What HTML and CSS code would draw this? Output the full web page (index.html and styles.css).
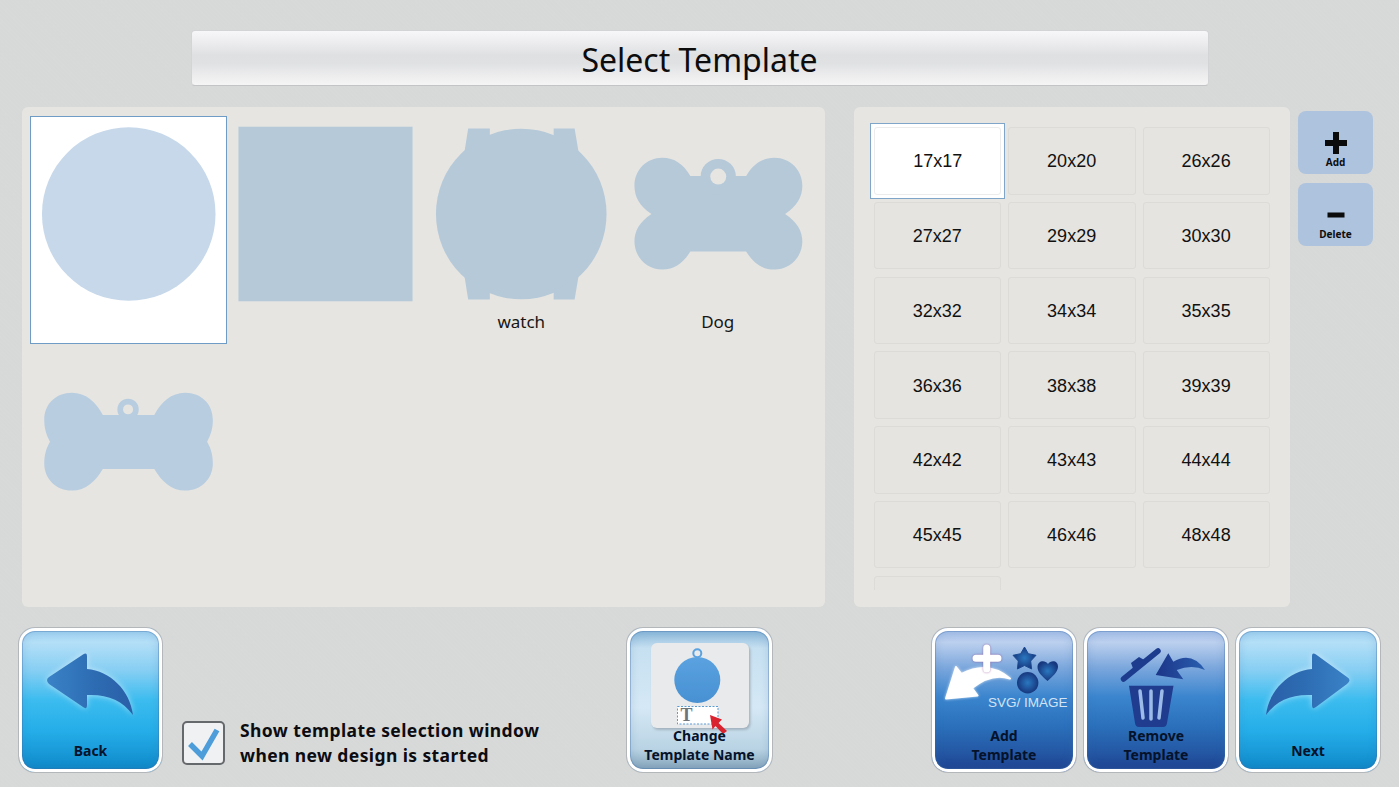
FILE: index.html
```html
<!DOCTYPE html>
<html lang="en">
<head>
<meta charset="utf-8">
<title>Select Template</title>
<link rel="stylesheet" href="styles.css">
</head>
<body>
<svg class="defs" width="0" height="0" aria-hidden="true">
  <defs>
    <linearGradient id="arrowL" x1="0" x2="1" y1="0" y2="0"><stop offset="0" stop-color="#3a82c6"/><stop offset=".55" stop-color="#2d6cb2"/><stop offset="1" stop-color="#2a5fa8"/></linearGradient>
    <linearGradient id="arrowR" x1="1" x2="0" y1="0" y2="0"><stop offset="0" stop-color="#3a82c6"/><stop offset=".55" stop-color="#2d6cb2"/><stop offset="1" stop-color="#2a5fa8"/></linearGradient>
    <radialGradient id="shape"><stop offset="0" stop-color="#2a78c0"/><stop offset="1" stop-color="#17387f"/></radialGradient>
    <linearGradient id="tagFill" x1="0" x2="0" y1="0" y2="1"><stop offset="0" stop-color="#5aa2e0"/><stop offset="1" stop-color="#4790d2"/></linearGradient>
    <linearGradient id="remArrow" x1="0" x2="1" y1="0" y2="0"><stop offset="0" stop-color="#1c3588"/><stop offset="1" stop-color="#2a5fb0"/></linearGradient>
  </defs>
</svg>

<header class="title-wrap"><h1 class="title">Select Template</h1></header>

<main class="main">
  <section class="templates">
    <div class="tpl tpl-selected">
      <svg class="tpl-art" viewBox="30 116 197 192"><circle class="lite" cx="129" cy="214" r="87"/></svg>
    </div>
    <div class="tpl">
      <svg class="tpl-art" viewBox="226.5 116 197 192"><rect class="fill" x="238" y="126.5" width="174.500" height="175"/></svg>
    </div>
    <div class="tpl">
      <svg class="tpl-art" viewBox="423 116 197 192">
        <circle class="fill" cx="521.500" cy="214" r="85.500"/>
        <path class="fill" d="M468.300 128.300H490V136L464.500 152ZM575 128.300H554V136L579 152ZM468.300 299.700H490V292L464.500 276ZM575 299.700H554V292L579 276Z"/>
      </svg>
      <span class="tpl-name">watch</span>
    </div>
    <div class="tpl">
      <svg class="tpl-art" viewBox="619.500 116 197 192">
        <path class="fill" d="M651 214C639 206 634 197 634 185.700C634 170 646 157.700 662 157.700C674 157.700 683 164 690 176H746C753 164 762 157.700 774.300 157.700C790 157.700 802.300 170 802.300 185.700C802.300 197 797 206 785 214C797 222 802.300 231 802.300 241.700C802.300 257 790 269.700 774.300 269.700C762 269.700 753 263 746 251.700H690C683 263 674 269.700 662 269.700C646 269.700 634 257 634 241.700C634 231 639 222 651 214Z"/>
        <circle class="fill" cx="718" cy="176.500" r="17.700"/>
        <circle class="hole" cx="718" cy="176.500" r="8"/>
      </svg>
      <span class="tpl-name">Dog</span>
    </div>
    <div class="tpl">
      <svg class="tpl-art" viewBox="30 344 197 192">
        <path class="fill2" d="M50 441.700C46 434 44.300 428 44.300 420C44.300 404 56 392.700 72 392.700C86 392.700 96 402 103 415H154.600C161.600 402 171.600 392.700 185.600 392.700C201.600 392.700 213.300 404 213.300 420C213.300 428 211.600 434 207.600 441.700C211.600 449 213.300 455 213.300 463.300C213.300 479 201.600 490.700 185.600 490.700C171.600 490.700 161.600 481 154.600 469H103C96 481 86 490.700 72 490.700C56 490.700 44.300 479 44.300 463.300C44.300 455 46 449 50 441.700Z"/>
        <circle class="fill2" cx="128.300" cy="409.300" r="10.700"/>
        <circle class="hole" cx="128.300" cy="409.300" r="5"/>
      </svg>
    </div>
  </section>

  <section class="sizes">
    <div class="size-grid">
      <div class="cell cell-selected">17x17</div><div class="cell">20x20</div><div class="cell">26x26</div>
      <div class="cell">27x27</div><div class="cell">29x29</div><div class="cell">30x30</div>
      <div class="cell">32x32</div><div class="cell">34x34</div><div class="cell">35x35</div>
      <div class="cell">36x36</div><div class="cell">38x38</div><div class="cell">39x39</div>
      <div class="cell">42x42</div><div class="cell">43x43</div><div class="cell">44x44</div>
      <div class="cell">45x45</div><div class="cell">46x46</div><div class="cell">48x48</div>
      <div class="cell"></div>
    </div>
  </section>

  <aside class="side">
    <button class="side-btn">
      <svg width="24" height="24" viewBox="0 0 24 24"><path d="M9 1h6v8h8v6h-8v8H9v-8H1V9h8z" fill="#0b0b0b"/></svg>
      <span>Add</span>
    </button>
    <button class="side-btn">
      <svg width="24" height="24" viewBox="0 0 24 24"><rect x="3.500" y="9.500" width="17" height="5" fill="#0b0b0b"/></svg>
      <span>Delete</span>
    </button>
  </aside>
</main>

<footer class="bottom">
  <div class="bottom-left">
    <button class="big big-sky big-back">
      <svg class="art" viewBox="19 628 143 144"><path class="glow" fill="url(#arrowL)" d="M49 677L83 654.500Q87 652 87 656V669C110 671 130 690 133 715C122 700 107 694 87 695V705Q87 710 83 707L49 684Q45 680 49 677Z"/></svg>
      <span class="big-label label-one">Back</span>
    </button>
    <div class="show-opt">
      <span class="checkbox"><svg width="39" height="40" viewBox="184 722 39 40"><path d="M190 743L202 755L217 729" fill="none" stroke="#4c9dd9" stroke-width="5.500"/></svg></span>
      <span class="show-text">Show template selection window<br>when new design is started</span>
    </div>
  </div>

  <div class="bottom-center">
    <button class="big big-pale">
      <svg class="art" viewBox="627 628 145 144">
        <rect class="card-shade" x="652.500" y="645" width="98" height="85" rx="6" fill="#a3b3be"/>
        <rect x="651" y="643" width="98" height="85" rx="6" fill="#e9eaeb"/>
        <circle cx="697.300" cy="653.300" r="4" fill="none" stroke="#5aa2e0" stroke-width="2"/>
        <circle cx="697.300" cy="680" r="23" fill="url(#tagFill)"/>
        <rect x="677.500" y="706.500" width="40.500" height="17.500" fill="#fff" stroke="#5c9bd6" stroke-width="1" stroke-dasharray="2 1.500"/>
        <text x="680.500" y="720.500" class="t-glyph">T</text>
        <path d="M710 715L722 719.500L718.500 723L727 731L723 734L715.500 726L712.500 729.500Z" fill="#d9232f"/>
      </svg>
      <span class="big-label label-two">Change<br>Template Name</span>
    </button>
  </div>

  <div class="bottom-right">
    <button class="big big-navy">
      <svg class="art" viewBox="932 628 144 144">
        <path class="glow-soft" fill="#fff" stroke="#fff" stroke-width="2" stroke-linejoin="round" d="M946 698.500L956 667L961.500 674Q988 660 1010 678.500Q992 672 972 688L977.500 695.500Z"/>
        <path class="glow-pink" d="M976 658.300H998M986.700 648V669" stroke="#fff" stroke-width="7" stroke-linecap="round" fill="none"/>
        <path fill="url(#shape)" stroke="#1b4a92" stroke-width="1" stroke-linejoin="round" d="M1024.500 647L1028.300 653.700L1036 655.300L1030.700 661L1031.600 669L1024.500 665.500L1017.400 669L1018.300 661L1013 655.300L1020.700 653.700Z"/>
        <path fill="url(#shape)" d="M1047.500 681C1042 676 1037.500 672.500 1037.500 667C1037.500 660.500 1045 659.500 1048 664C1051 659.500 1058.500 660.500 1058 667C1057.500 672.500 1053 676 1047.500 681Z"/>
        <circle cx="1027.700" cy="682.700" r="10.700" fill="url(#shape)"/>
        <text x="988" y="707" class="t-svg">SVG/ IMAGE</text>
      </svg>
      <span class="big-label label-two">Add<br>Template</span>
    </button>
    <button class="big big-navy">
      <svg class="art" viewBox="1084 628 144 144">
        <path d="M1123.500 679L1158 651" stroke="#1e3c8e" stroke-width="5.500" stroke-linecap="round" fill="none"/>
        <path d="M1134 671L1131 663L1139 657L1146 661" fill="#1e3c8e"/>
        <path fill="url(#remArrow)" d="M1155.700 675L1168.300 653.300L1173.300 661.700Q1192 651 1205 670Q1192 664 1176.700 670L1183.300 679.300Z"/>
        <path fill="#1f3c8f" d="M1129 685.700H1173.500L1167 723Q1166.500 727 1163 727H1139Q1135.500 727 1135 723Z"/>
        <path d="M1140 691L1143 718M1151 691V719M1162 691L1159 718" stroke="#9cbbe8" stroke-width="3.500" stroke-linecap="round" fill="none"/>
      </svg>
      <span class="big-label label-two">Remove<br>Template</span>
    </button>
    <button class="big big-sky">
      <svg class="art" viewBox="1236 628 144 144"><path class="glow" fill="url(#arrowR)" d="M1347 677L1316 654.500Q1312 652 1312 656V669C1289 671 1269 690 1266 715C1277 700 1292 694 1312 695V705Q1312 710 1316 707L1347 684Q1352 680 1347 677Z"/></svg>
      <span class="big-label label-one">Next</span>
    </button>
  </div>
</footer>
</body>
</html>
```

FILE: styles.css
```css
* { box-sizing: border-box; }

html, body { margin: 0; padding: 0; }

body {
  width: 1399px;
  height: 787px;
  overflow: hidden;
  font-family: "Noto Sans", "Open Sans", sans-serif;
  color: #111;
  background-color: #d7d9d9;
  background-image: repeating-linear-gradient(45deg, rgba(255,255,255,.025) 0 1px, transparent 1px 3px);
}

.defs { position: absolute; }

.title-wrap { padding-top: 30px; display: flex; justify-content: center; }

.title {
  width: 1018px;
  height: 56px;
  margin: 0;
  padding-top: 2px;
  display: flex;
  align-items: center;
  justify-content: center;
  font-size: 32px;
  font-weight: 400;
  color: #0c0c0c;
  border-radius: 4px;
  border: 1px solid #d3d4d6;
  border-bottom-color: #c3c4c6;
  background: linear-gradient(#f7f7f9 0, #eeeef0 18%, #dfe0e2 45%, #e0e1e3 60%, #eeeeef 85%, #f5f5f6 100%);
}

.main {
  display: flex;
  margin-top: 21px;
  padding-left: 22px;
  height: 500px;
}

.templates {
  width: 803px;
  height: 500px;
  padding: 9px 0 0 8px;
  background: #e6e5e1;
  border-radius: 6px;
  display: grid;
  grid-template-columns: repeat(4, 196.5px);
  grid-auto-rows: 228px;
  align-content: start;
}

.tpl { display: flex; flex-direction: column; align-items: center; }
.tpl-selected { background: #fff; outline: 1px solid #6f9cc6; outline-offset: -1px; }
.tpl-art { display: block; width: 196.5px; height: 192px; flex: none; }
.tpl-name { font-size: 17px; line-height: 28px; color: #161616; }

.lite { fill: #c6d8ea; }
.fill { fill: #b5c9d9; }
.fill2 { fill: #b8cde0; }
.hole { fill: #e6e5e1; }

.sizes {
  width: 436px;
  height: 500px;
  margin-left: 29px;
  background: #e6e5e1;
  border-radius: 6px;
  padding: 13px 0 0 16px;
}

.size-grid {
  isolation: isolate;
  height: 470px;
  overflow: hidden;
  padding: 7px 0 0 4px;
  display: grid;
  grid-template-columns: repeat(3, 127.300px);
  column-gap: 7.200px;
  grid-auto-rows: 67.500px;
  row-gap: 7.300px;
  align-content: start;
}

.cell {
  display: flex;
  align-items: center;
  justify-content: center;
  padding: 2px 1px 0 0;
  font-family: "Liberation Sans", Arial, sans-serif;
  font-size: 18px;
  color: #111;
  background: #e5e4e0;
  border: 1px solid #dcdbd7;
  border-radius: 3px;
}

.cell-selected {
  position: relative;
  background: #fff;
  border-color: #ececec;
  padding-right: 0;
}

.cell-selected::before {
  content: "";
  position: absolute;
  inset: -5px;
  z-index: -1;
  background: #fff;
  border: 1px solid #7fa6c8;
}

.side {
  width: 75px;
  margin-left: 8px;
  padding-top: 4px;
  display: flex;
  flex-direction: column;
  gap: 9px;
}

.side-btn {
  width: 75px;
  height: 63px;
  padding: 20px 0 0;
  border: 0;
  border-radius: 8px;
  background: #adc3de;
  display: flex;
  flex-direction: column;
  align-items: center;
  font-family: inherit;
  color: #0d0d0d;
}

.side-btn svg { display: block; flex: none; }
.side-btn span { font-size: 10px; line-height: 14px; font-weight: 700; }

.bottom {
  margin-top: 21px;
  padding: 0 19px;
  height: 144px;
  display: grid;
  grid-template-columns: 1fr 145px 1fr;
}

.bottom-left { display: flex; }
.bottom-center { display: flex; }
.bottom-right { display: flex; justify-content: flex-end; gap: 8px; }

.big {
  width: 144px;
  height: 144px;
  padding: 0;
  border: 0;
  border-radius: 16px;
  display: grid;
  font-family: inherit;
  color: #05122a;
  box-shadow:
    0 0 0 1px #b4b7b9,
    inset 0 0 0 3px #fff,
    inset 0 0 0 4px rgba(60,110,170,.35),
    inset 0 0 8px 4px rgba(60,110,170,.18);
}

.big-back { width: 143px; }
.big-pale { width: 145px; }

.big-sky {
  background: linear-gradient(#a2d4f2 3%, #b4dff7 10%, #85cef3 30%, #3cbcef 50%, #24ade8 72%, #1a9ad8 86%, #0a85c5 100%);
}

.big-navy {
  background: linear-gradient(#a9c2ea 3%, #bcd0ee 10%, #7aa6dc 28%, #3a85ce 48%, #2b70bb 68%, #2458a5 86%, #1d3f8c 100%);
}

.big-pale {
  background: linear-gradient(#8fbbdb 3%, #c6e0f1 14%, #d5e8f5 55%, #b9d3e4 84%, #7e9eb4 100%);
}

.art { grid-area: 1 / 1; display: block; width: 100%; height: 144px; }

.glow { filter: drop-shadow(0 0 3px rgba(255,255,255,.5)); }
.glow-soft { filter: drop-shadow(0 0 1.500px rgba(255,255,255,.7)); }
.glow-pink { filter: drop-shadow(0 0 1px rgba(130,40,130,.6)); }
.card-shade { filter: blur(.8px); }

.big-label {
  grid-area: 1 / 1;
  align-self: end;
  justify-self: center;
  font-size: 14px;
  font-weight: 700;
  line-height: 19px;
  text-align: center;
}

.label-one { padding-bottom: 12px; }
.label-two { padding-bottom: 8px; }

.t-glyph { font-family: "Liberation Serif", serif; font-size: 18px; font-weight: 700; fill: #6f7478; }
.t-svg { font-family: "Liberation Sans", sans-serif; font-size: 13.500px; fill: #d3e3f6; }

.show-opt {
  display: flex;
  align-items: center;
  gap: 15px;
  align-self: end;
  margin: 0 0 4px 20px;
}

.checkbox {
  width: 43px;
  height: 44px;
  flex: none;
  display: flex;
  border: 2px solid #66696c;
  border-radius: 5px;
  background: #f0f1f3;
}

.checkbox svg { display: block; }

.show-text {
  font-size: 17.500px;
  font-weight: 700;
  line-height: 25px;
  letter-spacing: .4px;
  color: #0c0c10;
  white-space: nowrap;
}
```
